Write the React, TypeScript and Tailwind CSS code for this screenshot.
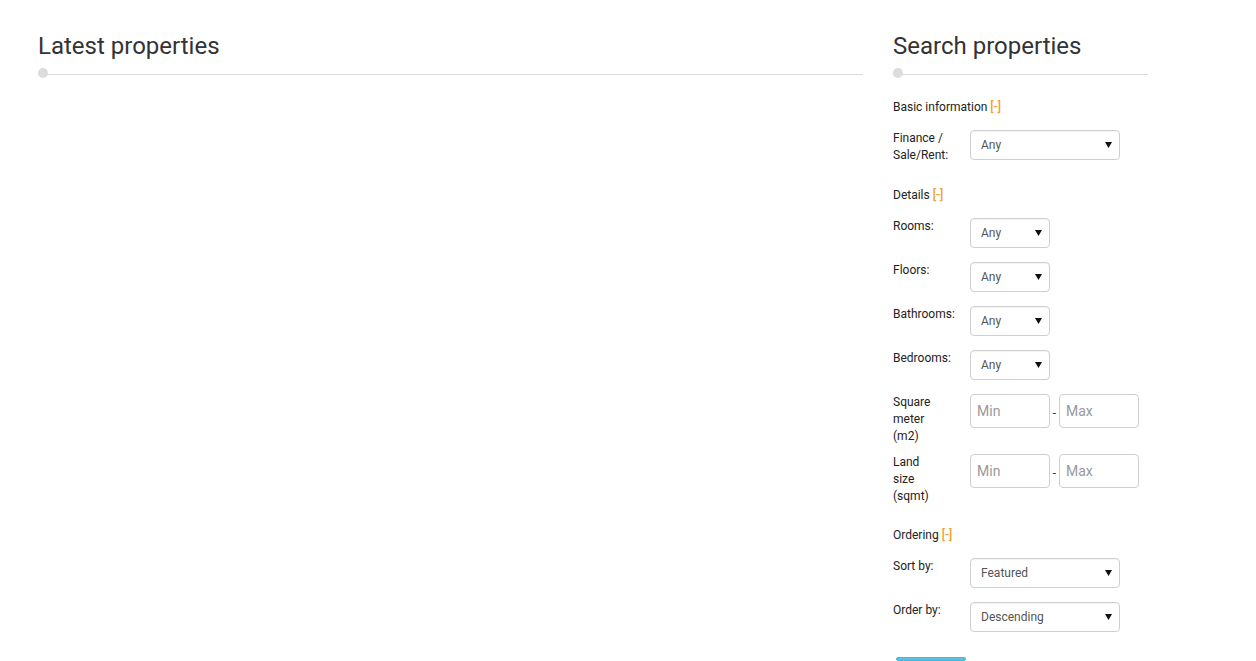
import React from "react";

const Sel = ({ w, text }: { w: string; text: string }) => (
  <div
    className={`${w} h-[30px] border border-[#cfcfcf] rounded-[4px] bg-white flex items-center justify-between pl-[10px] pr-[7px] text-[12px] text-[#555] shadow-[inset_0_1px_1px_rgba(0,0,0,0.05)]`}
  >
    <span>{text}</span>
    <svg width="7" height="6" viewBox="0 0 7 6">
      <path d="M0 0 H7 L3.5 6 Z" fill="#111" />
    </svg>
  </div>
);

const Inp = ({ ph }: { ph: string }) => (
  <div className="w-[80px] h-[34px] border border-[#cfcfcf] rounded-[4px] bg-white flex items-center pl-[6px] text-[14px] text-[#999]">
    {ph}
  </div>
);

const Heading = ({ title }: { title: string }) => (
  <div>
    <h2 className="text-[24px] leading-[28px] text-[#333] pt-[32px] h-[69px] font-normal">
      {title}
    </h2>
    <div className="relative h-[10px] flex items-center">
      <div className="absolute left-0 w-[10px] h-[10px] rounded-full bg-[#dcdcdc]" style={{ top: -1 }} />
      <div className="w-full h-px bg-[#dcdcdc]" />
    </div>
  </div>
);

const Section = ({ t, mt }: { t: string; mt: string }) => (
  <div className={`${mt} h-[17px] leading-[17px] text-[12px] text-[#222]`}>
    {t} <span className="text-[#f0a030] font-medium">[-]</span>
  </div>
);

const Row = ({ label, mt, children }: { label: React.ReactNode; mt: string; children: React.ReactNode }) => (
  <div className={`${mt} flex items-start`}>
    <div className="w-[77px] text-[12px] leading-[17px] text-[#222] whitespace-nowrap">{label}</div>
    {children}
  </div>
);

export default function App() {
  return (
    <div
      className="w-[1256px] h-[661px] bg-white overflow-hidden flex"
      style={{ fontFamily: "Roboto, 'Noto Sans', sans-serif" }}
    >
      <div className="ml-[38px] w-[825px]">
        <Heading title="Latest properties" />
      </div>
      <div className="ml-[30px] w-[255px] flex flex-col">
        <Heading title="Search properties" />
        <Section t="Basic information" mt="mt-[20px]" />
        <Row mt="mt-[14px]" label={<>Finance /<br />Sale/Rent:</>}>
          <Sel w="w-[150px]" text="Any" />
        </Row>
        <Section t="Details" mt="mt-[23px]" />
        <Row mt="mt-[14px]" label="Rooms:">
          <Sel w="w-[80px]" text="Any" />
        </Row>
        <Row mt="mt-[14px]" label="Floors:">
          <Sel w="w-[80px]" text="Any" />
        </Row>
        <Row mt="mt-[14px]" label="Bathrooms:">
          <Sel w="w-[80px]" text="Any" />
        </Row>
        <Row mt="mt-[14px]" label="Bedrooms:">
          <Sel w="w-[80px]" text="Any" />
        </Row>
        <Row mt="mt-[14px]" label={<>Square<br />meter<br />(m2)</>}>
          <div className="flex items-center">
            <Inp ph="Min" />
            <span className="w-[9px] text-center text-[12px] text-[#333] mt-[4px]">-</span>
            <Inp ph="Max" />
          </div>
        </Row>
        <Row mt="mt-[9px]" label={<>Land<br />size<br />(sqmt)</>}>
          <div className="flex items-center">
            <Inp ph="Min" />
            <span className="w-[9px] text-center text-[12px] text-[#333] mt-[4px]">-</span>
            <Inp ph="Max" />
          </div>
        </Row>
        <Section t="Ordering" mt="mt-[22px]" />
        <Row mt="mt-[14px]" label="Sort by:">
          <Sel w="w-[150px]" text="Featured" />
        </Row>
        <Row mt="mt-[14px]" label="Order by:">
          <Sel w="w-[150px]" text="Descending" />
        </Row>
        <div className="mt-[25px] ml-[3px] w-[70px] h-[34px] rounded-[4px] bg-[#5bc0de] border border-[#46b8da]" />
      </div>
    </div>
  );
}
